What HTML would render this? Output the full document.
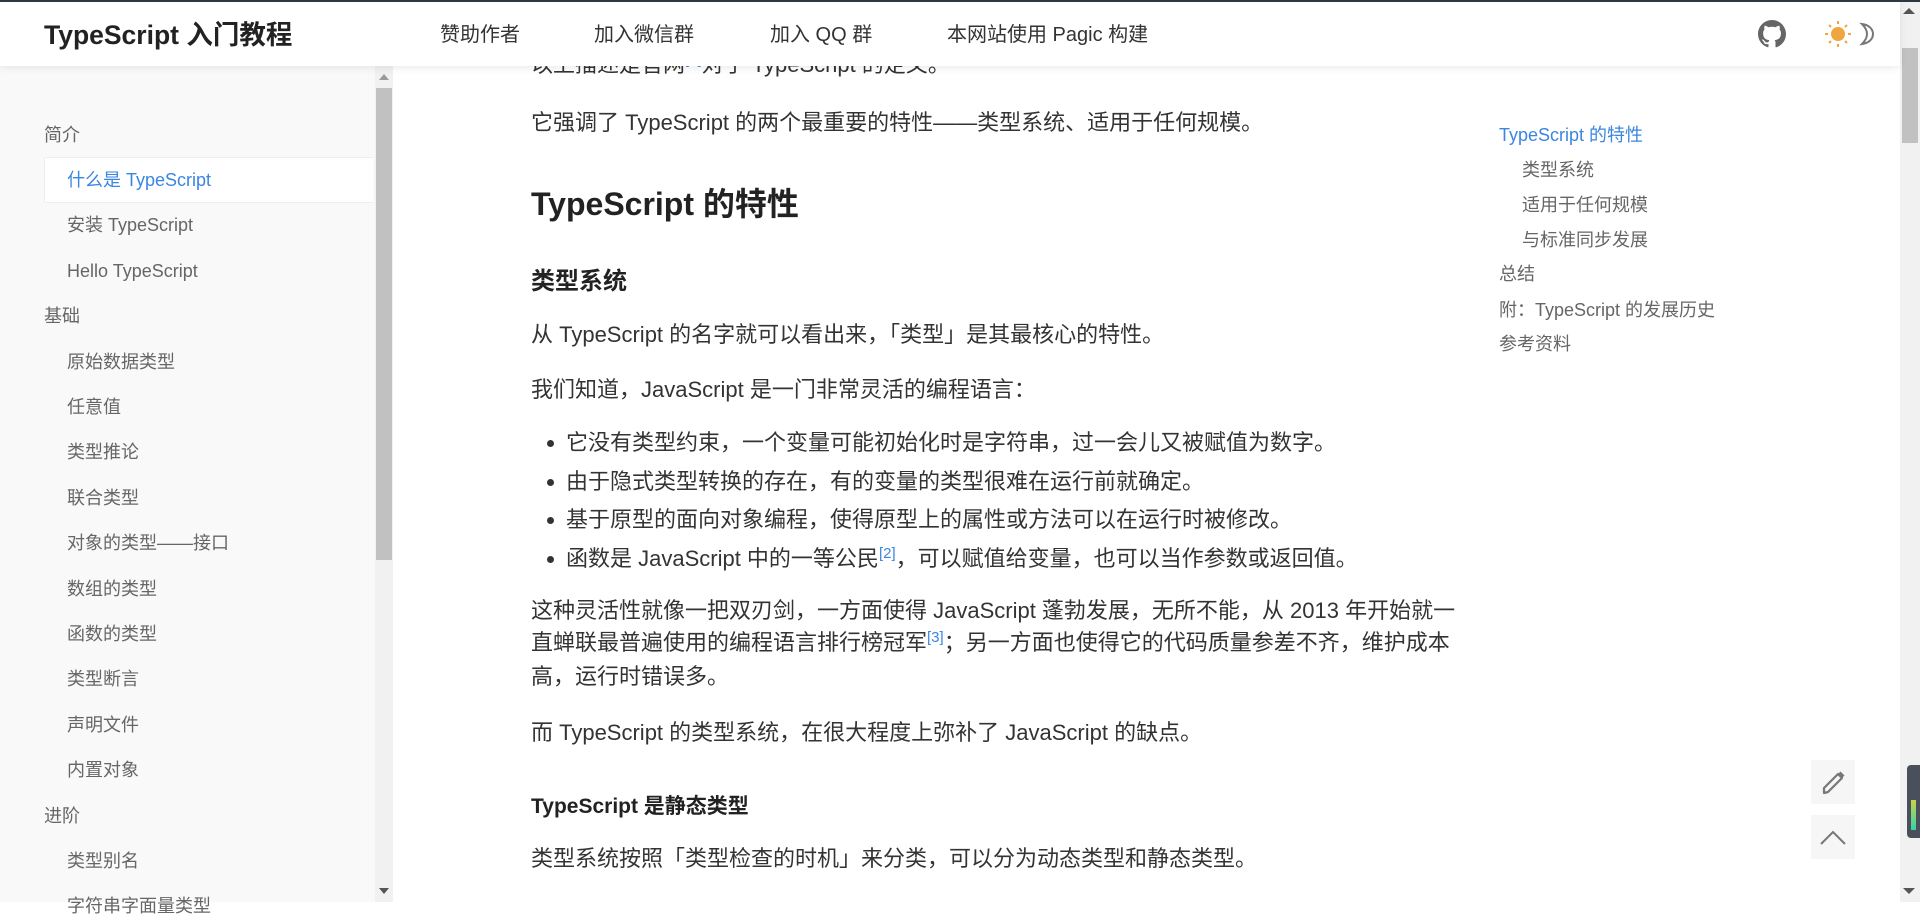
<!DOCTYPE html>
<html><head><meta charset="utf-8">
<style>
*{margin:0;padding:0;box-sizing:border-box}
html,body{width:1920px;height:902px;overflow:hidden;background:#fff;font-family:"Liberation Sans","Noto Sans CJK SC",sans-serif;color:#333}
.abs{position:absolute;white-space:nowrap}
#topbar{position:absolute;left:0;top:0;width:1920px;height:2px;background:#2b3a3f;z-index:20}
#header{position:absolute;left:0;top:0;width:1900px;height:66px;background:#fff;box-shadow:0 2px 8px rgba(0,0,0,.08);z-index:10}
#header .t{position:absolute;left:44px;top:17px;font-size:26.5px;font-weight:bold;color:#222;line-height:36px}
#header .n{position:absolute;top:21px;font-size:20px;color:#333;line-height:28px}
#side{position:absolute;left:0;top:66px;width:393px;height:836px;background:#f9f9f9}
#side div{position:absolute;font-size:18px;line-height:24px;color:#666;white-space:nowrap}
.sb{position:absolute;background:#f1f1f1}
.thumb{position:absolute;background:#c1c1c1}
.p{position:absolute;left:531px;font-size:22px;line-height:34px;white-space:nowrap;color:#333}
sup{color:#3b86e0;font-size:15px;vertical-align:8px;line-height:0}
.toc{position:absolute;font-size:18px;line-height:24px;color:#666;white-space:nowrap}
.dot{position:absolute;left:547px;width:7px;height:7px;border-radius:50%;background:#333}
.btn{position:absolute;left:1811px;width:44px;height:44px;background:#f6f6f6}
</style></head><body>
<div id="topbar"></div>
<div id="header">
<div class="t">TypeScript 入门教程</div>
<div class="n" style="left:440px">赞助作者</div>
<div class="n" style="left:594px">加入微信群</div>
<div class="n" style="left:770px">加入 QQ 群</div>
<div class="n" style="left:947px">本网站使用 Pagic 构建</div>
<svg style="position:absolute;left:1758px;top:20px" width="28" height="28" viewBox="0 0 16 16"><path fill="#666" d="M8 0C3.58 0 0 3.58 0 8c0 3.540 2.290 6.530 5.470 7.590.4.07.55-.17.55-.38 0-.19-.01-.82-.01-1.490-2.010.37-2.530-.49-2.690-.94-.09-.23-.48-.94-.82-1.130-.28-.15-.68-.52-.01-.53.63-.01 1.080.58 1.230.82.72 1.210 1.870.87 2.330.66.07-.52.28-.87.51-1.070-1.780-.2-3.640-.89-3.640-3.950 0-.87.31-1.590.82-2.150-.08-.2-.36-1.020.08-2.120 0 0 .67-.21 2.200.82.64-.18 1.320-.27 2-.27.68 0 1.360.09 2 .27 1.530-1.040 2.200-.82 2.200-.82.44 1.100.16 1.920.08 2.120.51.56.82 1.270.82 2.150 0 3.070-1.870 3.750-3.650 3.950.29.25.54.73.54 1.480 0 1.070-.01 1.930-.01 2.200 0 .21.15.46.55.38A8.013 8.013 0 0016 8c0-4.420-3.580-8-8-8z"/></svg>
<svg style="position:absolute;left:1824px;top:20px" width="28" height="28" viewBox="0 0 28 28"><circle cx="14" cy="14" r="7" fill="#f0a640"/><g stroke="#f0a640" stroke-width="2"><line x1="14" y1="1" x2="14" y2="4"/><line x1="14" y1="24" x2="14" y2="27"/><line x1="1" y1="14" x2="4" y2="14"/><line x1="24" y1="14" x2="27" y2="14"/><line x1="5" y1="5" x2="7" y2="7"/><line x1="21" y1="21" x2="23" y2="23"/><line x1="5" y1="23" x2="7" y2="21"/><line x1="21" y1="7" x2="23" y2="5"/></g></svg>
<svg style="position:absolute;left:1857px;top:22px" width="20" height="24" viewBox="0 0 20 24"><path d="M5 2 C13 3 16 8 16 12 C16 17 12 21 5 22 C9 18 10 15 10 12 C10 9 9 6 5 2Z" fill="none" stroke="#777" stroke-width="2"/></svg>
</div>

<div class="sb" style="left:1900px;top:0;width:20px;height:902px"></div>
<div class="thumb" style="left:1902px;top:48px;width:16px;height:95px"></div>
<div class="abs" style="left:1903px;top:8px;width:0;height:0;border-left:6px solid transparent;border-right:6px solid transparent;border-bottom:6px solid #555"></div>
<div class="abs" style="left:1903px;top:888px;width:0;height:0;border-left:6px solid transparent;border-right:6px solid transparent;border-top:6px solid #555"></div>
<div class="abs" style="left:1907px;top:765px;width:13px;height:73px;background:#4a4f5c;border-radius:4px 0 0 4px"></div>
<div class="abs" style="left:1911px;top:800px;width:5px;height:30px;background:linear-gradient(#c9d34a,#35d1a8)"></div>

<div id="side">
<div style="left:44px;top:57px">简介</div>
<div style="left:44px;top:91px;width:329px;height:46px;background:#fff;border:1px solid #eee;border-right:none"></div>
<div style="left:67px;top:102px;color:#3b86e0">什么是 TypeScript</div>
<div style="left:67px;top:147px">安装 TypeScript</div>
<div style="left:67px;top:193px">Hello TypeScript</div>
<div style="left:44px;top:238px">基础</div>
<div style="left:67px;top:284px">原始数据类型</div>
<div style="left:67px;top:329px">任意值</div>
<div style="left:67px;top:374px">类型推论</div>
<div style="left:67px;top:420px">联合类型</div>
<div style="left:67px;top:465px">对象的类型——接口</div>
<div style="left:67px;top:511px">数组的类型</div>
<div style="left:67px;top:556px">函数的类型</div>
<div style="left:67px;top:601px">类型断言</div>
<div style="left:67px;top:647px">声明文件</div>
<div style="left:67px;top:692px">内置对象</div>
<div style="left:44px;top:738px">进阶</div>
<div style="left:67px;top:783px">类型别名</div>
<div style="left:67px;top:828px">字符串字面量类型</div>
</div>
<div class="sb" style="left:375px;top:66px;width:18px;height:836px"></div>
<div class="thumb" style="left:376px;top:88px;width:16px;height:472px"></div>
<div class="abs" style="left:379px;top:74px;border-left:5px solid transparent;border-right:5px solid transparent;border-bottom:6px solid #999"></div>
<div class="abs" style="left:379px;top:888px;border-left:5px solid transparent;border-right:5px solid transparent;border-top:6px solid #555"></div>

<div class="p" style="top:48px">以上描述是官网<sup>[1]</sup>对于 TypeScript 的定义。</div>
<div class="p" style="top:106px">它强调了 TypeScript 的两个最重要的特性——类型系统、适用于任何规模。</div>
<div class="p" style="top:183px;font-size:32px;line-height:42px;font-weight:bold;color:#222">TypeScript 的特性</div>
<div class="p" style="top:266px;font-size:24px;line-height:32px;font-weight:bold;color:#222">类型系统</div>
<div class="p" style="top:318px">从 TypeScript 的名字就可以看出来，「类型」是其最核心的特性。</div>
<div class="p" style="top:373px">我们知道，JavaScript 是一门非常灵活的编程语言：</div>
<div class="dot" style="top:440px"></div><div class="p" style="left:566px;top:426px">它没有类型约束，一个变量可能初始化时是字符串，过一会儿又被赋值为数字。</div>
<div class="dot" style="top:479px"></div><div class="p" style="left:566px;top:465px">由于隐式类型转换的存在，有的变量的类型很难在运行前就确定。</div>
<div class="dot" style="top:517px"></div><div class="p" style="left:566px;top:503px">基于原型的面向对象编程，使得原型上的属性或方法可以在运行时被修改。</div>
<div class="dot" style="top:556px"></div><div class="p" style="left:566px;top:542px">函数是 JavaScript 中的一等公民<sup>[2]</sup>，可以赋值给变量，也可以当作参数或返回值。</div>
<div class="p" style="top:594px">这种灵活性就像一把双刃剑，一方面使得 JavaScript 蓬勃发展，无所不能，从 2013 年开始就一</div>
<div class="p" style="top:626px">直蝉联最普遍使用的编程语言排行榜冠军<sup>[3]</sup>；另一方面也使得它的代码质量参差不齐，维护成本</div>
<div class="p" style="top:660px">高，运行时错误多。</div>
<div class="p" style="top:716px">而 TypeScript 的类型系统，在很大程度上弥补了 JavaScript 的缺点。</div>
<div class="p" style="top:793px;font-size:21px;line-height:28px;font-weight:bold;color:#222">TypeScript 是静态类型</div>
<div class="p" style="top:842px">类型系统按照「类型检查的时机」来分类，可以分为动态类型和静态类型。</div>

<div class="toc" style="left:1499px;top:123px;color:#3b86e0">TypeScript 的特性</div>
<div class="toc" style="left:1522px;top:158px">类型系统</div>
<div class="toc" style="left:1522px;top:193px">适用于任何规模</div>
<div class="toc" style="left:1522px;top:228px">与标准同步发展</div>
<div class="toc" style="left:1499px;top:262px">总结</div>
<div class="toc" style="left:1499px;top:298px">附：TypeScript 的发展历史</div>
<div class="toc" style="left:1499px;top:332px">参考资料</div>

<div class="btn" style="top:760px"><svg width="44" height="44" viewBox="0 0 44 44"><path d="M13 33 L13 28 L27 14 L31 18 L17 32 Z" fill="none" stroke="#777" stroke-width="2.2" stroke-linejoin="round"/><path d="M27 14 L29.5 11.5 L33.5 15.5 L31 18Z" fill="#777"/></svg></div>
<div class="btn" style="top:815px"><svg width="44" height="44" viewBox="0 0 44 44"><path d="M10 29 L22 17 L34 29" fill="none" stroke="#777" stroke-width="2"/></svg></div>
</body></html>
